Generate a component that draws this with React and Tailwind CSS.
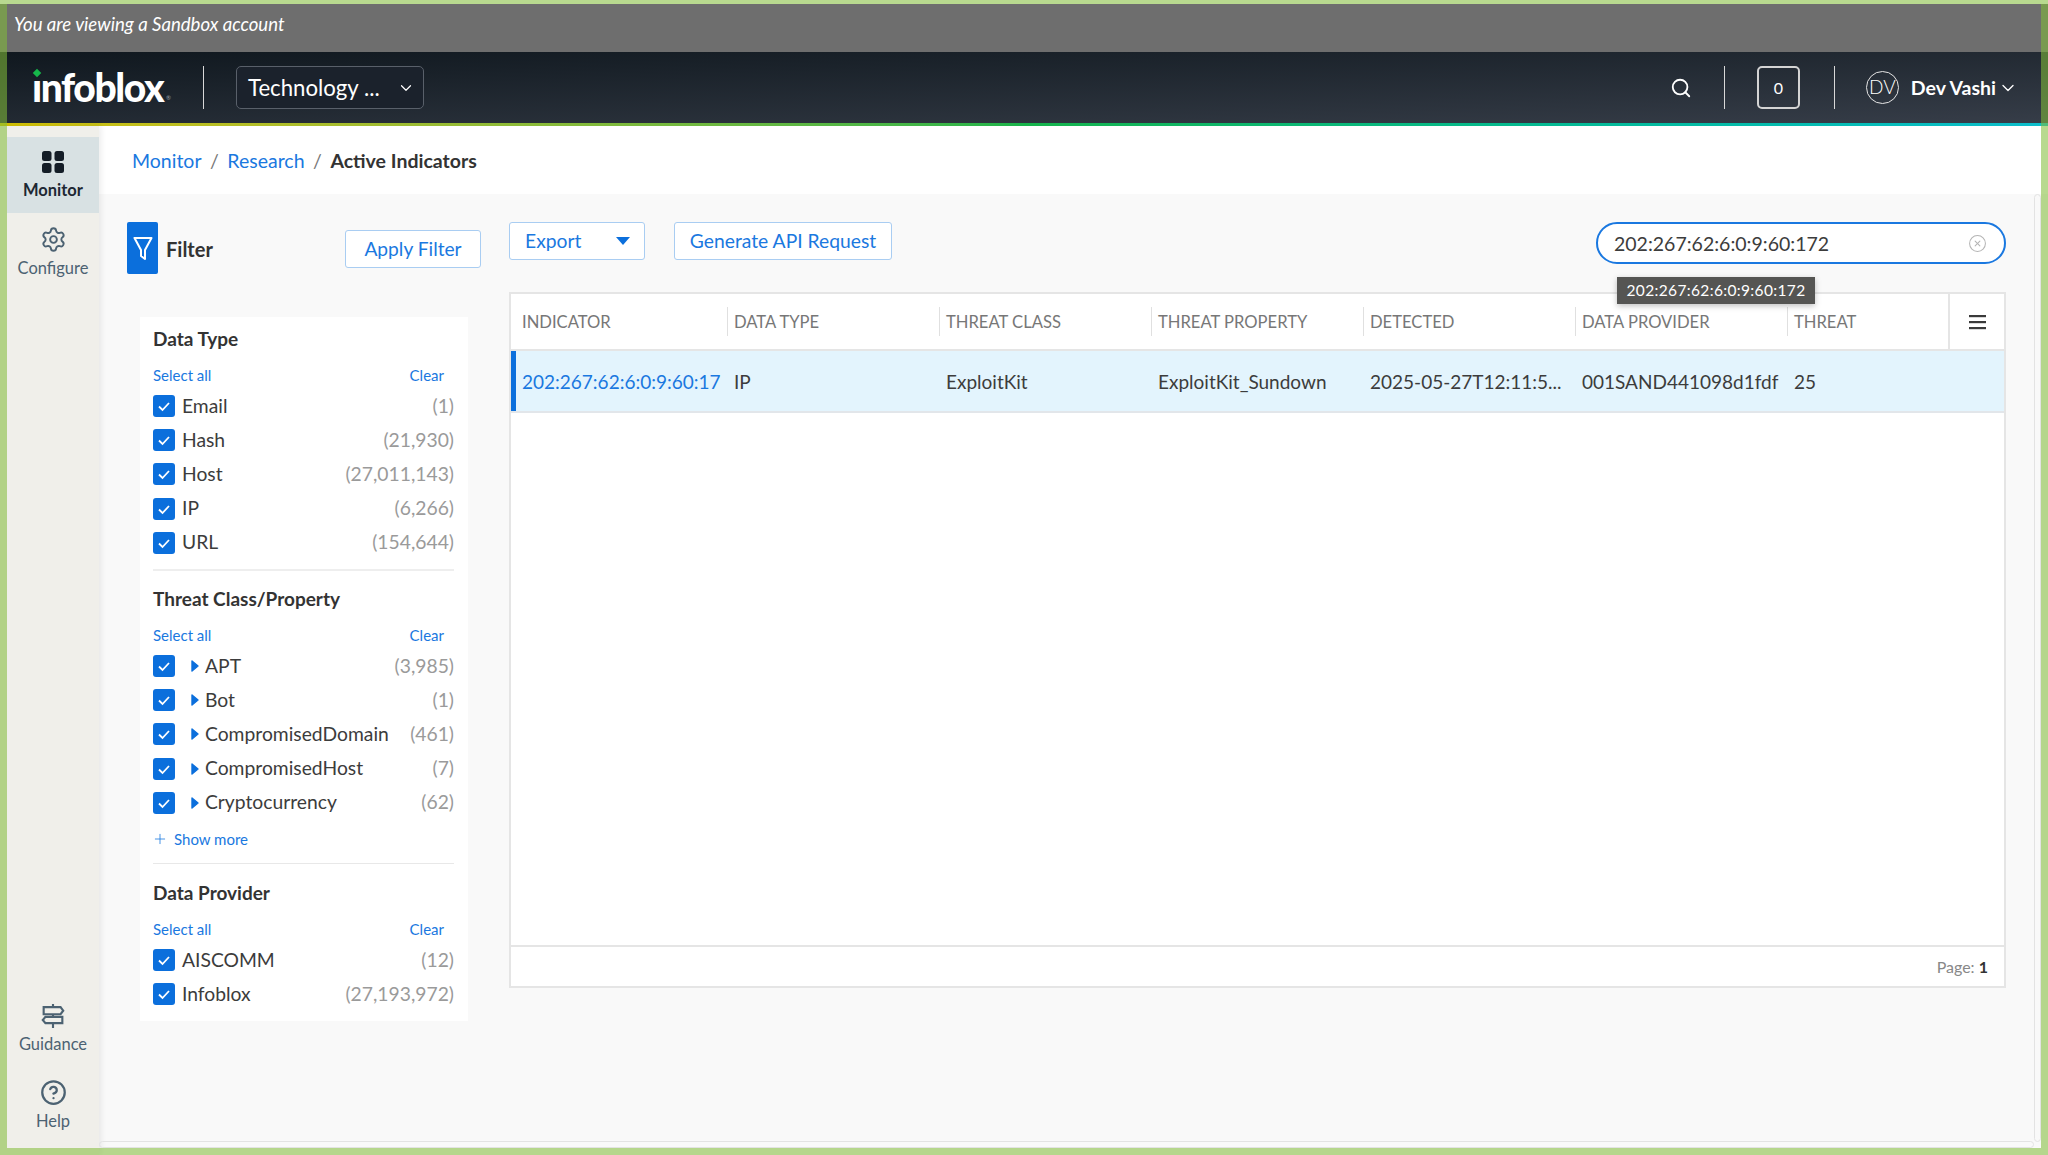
import React from "react";
import { ChevronDown, CircleHelp, CircleX, Plus, Search, Settings } from "lucide-react";

const Check = () => (
  <span className="flex h-[22px] w-[22px] shrink-0 items-center justify-center rounded-[3px] bg-[#0b6fdc]">
    <svg width="14" height="14" viewBox="0 0 14 14" fill="none" stroke="#fff" strokeWidth="1.8">
      <path d="M2 7.5 L5.5 11 L12 4" />
    </svg>
  </span>
);

const Links = () => (
  <div className="flex h-5 items-center justify-between pr-[10px] text-[15px] text-[#1a78e0]">
    <span>Select all</span>
    <span>Clear</span>
  </div>
);

const Row = ({ label, count, tree }) => (
  <div className="flex h-[34.2px] items-center">
    <Check />
    {tree ? (
      <>
        <svg className="ml-4 mr-[6px] shrink-0" width="8" height="12" viewBox="0 0 8 12" fill="#0b6fdc" stroke="#0b6fdc" strokeWidth="1.4" strokeLinejoin="round">
          <path d="M1 1 L7 6 L1 11 Z" />
        </svg>
        <span className="text-[19.3px] text-[#3c3c3c]">{label}</span>
      </>
    ) : (
      <span className="ml-[7px] text-[19.3px] text-[#3c3c3c]">{label}</span>
    )}
    <span className="ml-auto text-[19.3px] text-[#9a9a9a]">{count}</span>
  </div>
);

const FilterGroup = ({ title, rows, tree, more }) => (
  <div>
    <h3 className="flex h-[44px] items-center text-[19px] font-bold text-[#333]">{title}</h3>
    <div className="mt-1">
      <Links />
    </div>
    <div className="mt-[4px]">
      {rows.map((r) => (
        <Row key={r[0]} label={r[0]} count={r[1]} tree={tree} />
      ))}
    </div>
    {more && (
      <div className="mt-[9px] flex h-5 items-center gap-[6px] text-[15px] text-[#1a78e0]">
        <Plus className="-ml-[1px]" size={16} strokeWidth={1.2} />
        <span>Show more</span>
      </div>
    )}
  </div>
);

const NavItem = ({ icon, label, active }) => (
  <div className={`flex flex-col items-center ${active ? "h-[76px] bg-[#d8e1e3] pt-[13px] text-[#1d2833]" : "h-[77px] pt-[13px] text-[#4c6272]"}`}>
    {icon}
    <span className={`text-[16.5px] ${active ? "mt-[4px] font-bold" : "mt-[3px]"}`}>{label}</span>
  </div>
);

const columns = [
  ["INDICATOR", "202:267:62:6:0:9:60:17"],
  ["DATA TYPE", "IP"],
  ["THREAT CLASS", "ExploitKit"],
  ["THREAT PROPERTY", "ExploitKit_Sundown"],
  ["DETECTED", "2025-05-27T12:11:5..."],
  ["DATA PROVIDER", "001SAND441098d1fdf"],
  ["THREAT", "25"],
];

const headWidths = ["w-[216px]", "w-[212px]", "w-[212px]", "w-[212px]", "w-[212px]", "w-[212px]", "w-[161px]"];

export default function App() {
  return (
    <div className="relative flex h-[1155px] w-[2048px] flex-col overflow-hidden bg-white font-['Lato','Liberation_Sans',sans-serif]">
      {/* Banner */}
      <div className="mt-[4px] flex h-[48px] items-center bg-[#6e6e6e] pb-[6px] pl-[14px] text-[18.6px] italic text-white">
        You are viewing a Sandbox account
      </div>

      {/* Top bar */}
      <header className="flex h-[71px] items-center bg-gradient-to-br from-[#10181f] to-[#363d48] pl-[32px] pr-[30px] text-white">
        <div className="relative w-[135px] whitespace-nowrap text-[39px] leading-none font-black tracking-[-1.4px]">
          ınfoblox
          <span className="absolute left-[134px] top-[27px] text-[6px] font-normal tracking-normal text-[#9aa0a6]">®</span>
          <span className="absolute left-[2px] top-[2px] h-[6px] w-[6px] rotate-45 bg-[#16b84a]" />
        </div>
        <div className="ml-[36px] h-[43px] w-px bg-[#d8d8d8]" />
        <div className="ml-[32px] flex h-[43px] w-[188px] items-center justify-between rounded-[5px] border border-[#59606a] bg-[#1b222c] pl-[11px] pr-[8px] text-[22.2px]">
          <span>Technology ...</span>
          <ChevronDown size={18} strokeWidth={1.6} />
        </div>
        <Search className="ml-auto" size={22} strokeWidth={2} />
        <div className="ml-[32px] h-[43px] w-px bg-[#d8d8d8]" />
        <div className="ml-[32px] flex h-[43px] w-[43px] items-center justify-center rounded-[5px] border-2 border-[#d4d4d4] text-[16px]">
          0
        </div>
        <div className="ml-[34px] h-[43px] w-px bg-[#d8d8d8]" />
        <div className="ml-[31px] flex h-[33px] w-[33px] items-center justify-center rounded-full border border-[#e5e5e5] text-[19px] font-light">
          DV
        </div>
        <span className="ml-[12px] text-[19.5px] font-bold">Dev Vashi</span>
        <ChevronDown className="ml-[2px]" size={20} strokeWidth={1.6} />
      </header>
      <div className="h-[3px] bg-gradient-to-r from-[#d3c000] via-[#16b34a] to-[#0dbdcc]" />

      <div className="flex min-h-0 flex-1">
        {/* Side nav */}
        <aside className="relative z-10 flex w-[99px] shrink-0 flex-col bg-[#f0efea] pb-[12px] pl-[7px] pt-[11px] shadow-[2px_0_6px_rgba(0,0,0,0.08)]">
          <NavItem
            active
            label="Monitor"
            icon={
              <svg width="24" height="24" viewBox="0 0 24 24" fill="#141d27">
                <rect x="1" y="1" width="9.5" height="10" rx="2.5" />
                <rect x="13.5" y="1" width="9.5" height="10" rx="2.5" />
                <rect x="1" y="13" width="9.5" height="10" rx="2.5" />
                <rect x="13.5" y="13" width="9.5" height="10" rx="2.5" />
              </svg>
            }
          />
          <NavItem label="Configure" icon={<Settings size={27} strokeWidth={1.7} />} />
          <div className="mt-auto">
            <NavItem
              label="Guidance"
              icon={
                <svg className="my-[1.5px]" width="24" height="24" viewBox="0 0 27 27" fill="none" stroke="currentColor" strokeWidth="2.4">
                  <path d="M13.5 0 V3 M13.5 12 V15 M13.5 22 V27" />
                  <path d="M3 3.5 H22 L25 7.5 L22 11.5 H3 Z" />
                  <path d="M5 14.5 H24 V21.5 H5 L2 18 Z" />
                </svg>
              }
            />
            <NavItem label="Help" icon={<CircleHelp size={27} strokeWidth={2} />} />
          </div>
        </aside>

        <main className="flex min-w-0 flex-1 flex-col">
          {/* Breadcrumb */}
          <nav className="flex h-[68px] shrink-0 items-center gap-[8.5px] pl-[33px] pt-[1px] text-[19.5px]">
            <span className="text-[#1a78e0]">Monitor</span>
            <span className="text-[#777]">/</span>
            <span className="text-[#1a78e0]">Research</span>
            <span className="text-[#777]">/</span>
            <span className="font-bold text-[#333]">Active Indicators</span>
          </nav>

          <div className="flex flex-1 bg-[#f9f9f9] pl-[28px] pr-[40px] pt-[28px]">
            {/* Filter column */}
            <div className="w-[354px] shrink-0">
              <div className="flex h-[52px] items-center">
                <div className="flex h-[52px] w-[31px] items-center justify-center rounded-[2px] bg-[#0b6fdc]">
                  <svg width="20" height="25" viewBox="0 0 20 25" fill="none" stroke="#fff" strokeWidth="2" strokeLinejoin="round">
                    <path d="M1.5 2 H18.5 L12 14 V23 L8 20 V14 Z" />
                  </svg>
                </div>
                <span className="ml-2 pt-[1px] text-[20px] font-bold text-[#333]">Filter</span>
                <button className="ml-auto mt-[1px] h-[38px] w-[136px] rounded-[3px] border border-[#a9cdf2] bg-white pt-[1px] text-[19.2px] text-[#1a78e0]">
                  Apply Filter
                </button>
              </div>
              <div className="ml-[13px] mt-[43px] w-[328px] bg-white pb-[10px] pl-[13px] pr-[14px]">
                <FilterGroup
                  title="Data Type"
                  rows={[
                    ["Email", "(1)"],
                    ["Hash", "(21,930)"],
                    ["Host", "(27,011,143)"],
                    ["IP", "(6,266)"],
                    ["URL", "(154,644)"],
                  ]}
                />
                <div className="mb-[6px] mt-[9px] h-[2px] bg-[#eee]" />
                <FilterGroup
                  title="Threat Class/Property"
                  tree
                  more
                  rows={[
                    ["APT", "(3,985)"],
                    ["Bot", "(1)"],
                    ["CompromisedDomain", "(461)"],
                    ["CompromisedHost", "(7)"],
                    ["Cryptocurrency", "(62)"],
                  ]}
                />
                <div className="mb-[7px] mt-[14px] h-px bg-[#e8e8e8]" />
                <FilterGroup
                  title="Data Provider"
                  rows={[
                    ["AISCOMM", "(12)"],
                    ["Infoblox", "(27,193,972)"],
                  ]}
                />
              </div>
            </div>

            {/* Results */}
            <div className="ml-[28px] w-[1497px] shrink-0">
              <div className="flex h-[42px] items-start">
                <button className="flex h-[38px] w-[136px] items-center justify-between rounded-[3px] border border-[#a9cdf2] bg-white pl-[15px] pr-[14px] text-[19.3px] text-[#1a78e0]">
                  Export
                  <svg width="14" height="8" viewBox="0 0 14 8" fill="#0b6fdc">
                    <path d="M0 0 H14 L7 8 Z" />
                  </svg>
                </button>
                <button className="ml-[29px] h-[38px] w-[218px] rounded-[3px] border border-[#a9cdf2] bg-white text-[19.3px] text-[#1a78e0]">
                  Generate API Request
                </button>
                <div className="relative ml-auto flex h-[42px] w-[410px] items-center justify-between rounded-full border-2 border-[#1a78e0] bg-white pl-[16px] pr-[17px] pt-[1px] text-[19.5px] text-[#3c3c3c]">
                  <span>202:267:62:6:0:9:60:172</span>
                  <CircleX size={19} strokeWidth={1.3} className="text-[#b4b4b4]" />
                  <div className="absolute left-[19px] top-[53px] z-20 flex h-[27px] w-[198px] items-center justify-center bg-[#555553] text-[15.5px] tracking-[0.35px] text-white shadow-[0_2px_6px_rgba(0,0,0,0.25)]">
                    202:267:62:6:0:9:60:172
                  </div>
                </div>
              </div>

              <div className="mt-[28px] flex h-[696px] flex-col border-2 border-[#e5e5e5] bg-white">
                <div className="flex h-[57px] shrink-0 border-b-2 border-[#e5e5e5]">
                  {columns.map((c, i) => (
                    <div
                      key={c[0]}
                      className={`my-[13px] flex ${headWidths[i]} items-center pt-[2px] text-[16.6px] text-[#777] ${i > 0 ? "border-l border-[#e0e0e0] pl-[6px]" : "pl-[11px]"}`}
                    >
                      {c[0]}
                    </div>
                  ))}
                  <div className="flex flex-1 items-center justify-center border-l-2 border-[#e5e5e5]">
                    <svg width="17" height="16" viewBox="0 0 17 16" fill="#3a3a3a">
                      <rect y="1" width="17" height="2.2" />
                      <rect y="7" width="17" height="2.2" />
                      <rect y="13" width="17" height="2.2" />
                    </svg>
                  </div>
                </div>
                <div className="flex h-[62px] shrink-0 items-center border-b-2 border-[#e2e6ea] bg-[#e3f4fd] text-[19px] text-[#3c3c3c]">
                  {columns.map((c, i) => (
                    <div
                      key={c[0]}
                      className={`flex h-full items-center whitespace-nowrap pt-[3px] ${headWidths[i]} ${i === 0 ? "border-l-[5px] border-[#0b6fdc] pl-[6px] text-[#1a78e0]" : "pl-[7px]"}`}
                    >
                      {c[1]}
                    </div>
                  ))}
                </div>
                <div className="flex-1" />
                <div className="flex h-[41px] shrink-0 items-center justify-end border-t-2 border-[#e5e5e5] pr-[16px] text-[16px] text-[#888]">
                  Page:&nbsp;<span className="font-bold text-[#333]">1</span>
                </div>
              </div>
            </div>
          </div>
        </main>
      </div>

      {/* Scroll track outlines */}
      <div className="absolute bottom-[7px] left-[99px] z-20 h-[7px] w-[1935px] rounded-[4px] border border-[#e3e3e3]" />
      <div className="absolute right-[7px] top-[194px] z-20 h-[948px] w-[7px] rounded-[4px] border border-[#e3e3e3]" />

      {/* Green sandbox frame */}
      <div className="pointer-events-none absolute inset-0 z-30 border-x-[7px] border-b-[7px] border-t-[4px] border-[rgba(131,188,58,0.57)]" />
    </div>
  );
}
